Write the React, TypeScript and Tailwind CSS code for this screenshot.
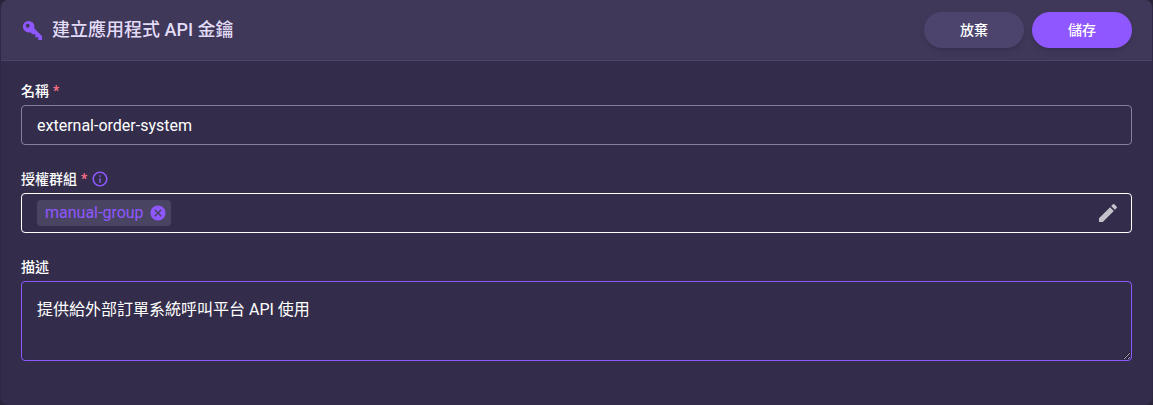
import React, { useState } from 'react';
import { MdCancel, MdEdit, MdInfoOutline } from 'react-icons/md';

interface FieldLabelProps {
  htmlFor: string;
  text: string;
  required?: boolean;
  children?: React.ReactNode;
}

const FieldLabel: React.FC<FieldLabelProps> = ({ htmlFor, text, required, children }) => (
  <div className="flex items-center h-5 mb-1 text-sm font-medium text-white">
    <label htmlFor={htmlFor}>
      {text}
      {required && <span className="ml-1 text-[#ff7088]">*</span>}
    </label>
    {children}
  </div>
);

const KeyIcon = () => (
  <svg className="w-[23px] h-[23px] shrink-0 text-[#8f57ff]" viewBox="0 0 24 24" fill="currentColor" aria-hidden="true">
    <path d="M22,18V22H18V19H15V16H12L9.74,13.74C9.19,13.91 8.61,14 8,14A6,6 0 0,1 2,8A6,6 0 0,1 8,2A6,6 0 0,1 14,8C14,8.61 13.91,9.19 13.74,9.74L22,18M7,5A2,2 0 0,0 5,7A2,2 0 0,0 7,9A2,2 0 0,0 9,7A2,2 0 0,0 7,5Z" />
  </svg>
);

export default function App() {
  const [name, setName] = useState('external-order-system');
  const [groups, setGroups] = useState(['manual-group']);
  const [description, setDescription] = useState('提供給外部訂單系統呼叫平台 API 使用');

  return (
    <div className="min-h-screen flex flex-col bg-[#29243c] font-[Roboto,'Noto_Sans_CJK_TC',sans-serif]">
      <form className="flex-1 rounded-lg border-x border-[#2f2945] bg-[#332d4b] overflow-hidden" onSubmit={(e) => e.preventDefault()}>
        <header className="flex items-center justify-between px-5 py-3 border-b border-[#4b4467] bg-[#3f3859]">
          <div className="flex items-center gap-2">
            <KeyIcon />
            <h1 className="text-lg leading-6 font-medium text-[#e3dcf8]">建立應用程式 API 金鑰</h1>
          </div>
          <div className="flex gap-2">
            <button type="button" className="w-25 h-9 rounded-full bg-[#4d446d] text-sm font-medium text-white shadow-md">
              放棄
            </button>
            <button type="submit" className="w-25 h-9 rounded-full bg-[#8f57ff] text-sm font-medium text-white shadow-md">
              儲存
            </button>
          </div>
        </header>

        <div className="flex flex-col gap-6 px-5 pt-5 pb-11">
          <div>
            <FieldLabel htmlFor="name" text="名稱" required />
            <input
              id="name"
              value={name}
              onChange={(e) => setName(e.target.value)}
              className="block w-full h-10 px-[15px] rounded border border-[#85819a] bg-transparent text-base text-white outline-none"
            />
          </div>

          <div>
            <FieldLabel htmlFor="groups" text="授權群組" required>
              <MdInfoOutline className="ml-1 w-[18px] h-[18px] text-[#8f57ff]" />
            </FieldLabel>
            <div className="flex items-center h-10 px-[15px] rounded border border-white">
              {groups.map((group) => (
                <span key={group} className="flex items-center gap-[5px] h-[26px] pl-2 pr-1 rounded bg-[#4a4463] text-base text-[#8f57ff]">
                  {group}
                  <button type="button" aria-label={`移除 ${group}`} onClick={() => setGroups(groups.filter((g) => g !== group))}>
                    <MdCancel className="w-[18px] h-[18px]" />
                  </button>
                </span>
              ))}
              <button id="groups" type="button" aria-label="編輯" className="ml-auto -mr-1 text-[#c3c1ca]">
                <MdEdit className="w-6 h-6" />
              </button>
            </div>
          </div>

          <div>
            <FieldLabel htmlFor="description" text="描述" />
            <textarea
              id="description"
              value={description}
              onChange={(e) => setDescription(e.target.value)}
              className="block w-full h-20 px-[15px] py-4 rounded border border-[#8f57ff] bg-transparent text-base leading-6 text-white outline-none resize-y"
            />
          </div>
        </div>
      </form>
    </div>
  );
}
